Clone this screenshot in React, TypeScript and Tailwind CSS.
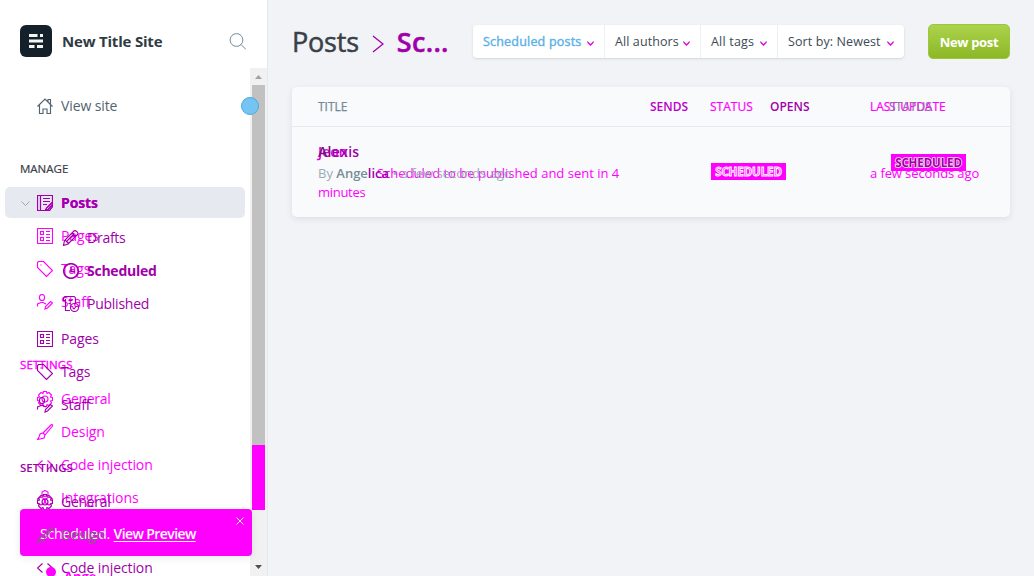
import React from "react";

type IconName = "home" | "posts" | "pages" | "tag" | "staff" | "pen" | "clock" | "published" | "gear" | "brush" | "code" | "box";

const shapes: Record<IconName, React.ReactNode> = {
  home: <path d="M.5 8.5 8 1l7.5 7.5M2.5 7v8.5H6V11h4v4.5h3.5V7M11 3.5v-2h2.5V6" />,
  posts: <path d="M.5.5h15v11l-3 4H.5zM3.5.5v15M6 3.500h7M6 6.500h7M6 9.500h4M15 7.500l-5 5-2 3 3-1 4.500-5" />,
  pages: <path d="M.5.5h15v15H.5zM3.500 3.500h3v3h-3zM3.500 9.500h3v3h-3zM9 3.500h4M9 6.500h4M9 9.500h4M9 12.500h4" />,
  tag: <path d="M.5 1.500v5l9 9 6-6-9-9h-5zM4 3.500v1" />,
  staff: <path d="M5 .5a2.500 2.500 0 0 1 2.500 2.500v1a2.500 2.500 0 0 1-5 0V3A2.500 2.500 0 0 1 5 .5zM.5 12.500V10L4 8.500h2L9 10M8 15l.5-2.500 5-5 2 1.500-5 5z" />,
  pen: <path d="m.5 15.500 1-5L11 1c1.500-1.500 5 2 3.500 3.500L5 14zM9 3l4 4M2 10l4 4M4 11l7-7" />,
  clock: <><circle cx="8" cy="8" r="7.300" strokeWidth="1.600" /><path d="M8 4v4.500h4" strokeWidth="1.600" /></>,
  published: <><path d="M7 14.500H2.500v-10H.5V3C.5 1.500 1 .5 2.500.5h8c1.500 0 2 1 2 2.500v4M2.500 4.500V3M5.500 4.500h4M5.500 7.500h2" /><circle cx="11.500" cy="11.500" r="4" /><path d="m9.500 11.500 1.500 1.500 2.500-3" /></>,
  gear: <><path d="M6.500.5h3l.5 2 2-1 2.500 2.500-1 2 2 .5v3l-2 .5 1 2-2.500 2.500-2-1-.5 2h-3l-.5-2-2 1L1.500 12l1-2-2-.5v-3l2-.5-1-2L4 1.500l2 1z" /><circle cx="8" cy="8" r="3" /></>,
  brush: <path d="M6 9 14 1c1-1 2 0 1.500 1L8 11M6 9l2 2-1 3-6.500 1.500L2 13l1-3z" />,
  code: <path d="M5.500 3.500.5 8l5 4.500M10.500 3.500l5 4.500-5 4.500" />,
  box: <path d="M8 .5 11 2v3L8 6.500 5 5V2zM4 7l3.500 2v4L4 15l-3.500-2V9zM12 7l3.500 2v4L12 15l-3.500-2V9z" />,
};

function Icon({ name }: { name: IconName }) {
  return <svg viewBox="0 0 16 16" className="size-4 shrink-0 fill-none stroke-current stroke-[1.15]">{shapes[name]}</svg>;
}

function Row({ icon, label, className = "", child = false }: { icon: IconName; label: string; className?: string; child?: boolean }) {
  return (
    <div className={`flex h-[33px] shrink-0 items-center gap-2 ${child ? "pl-[63px] tracking-[-0.25px]" : "pl-[37px] tracking-[-0.1px]"} ${className}`}>
      <Icon name={icon} />
      <span className="text-[14px] leading-5 whitespace-nowrap">{label}</span>
    </div>
  );
}

function Filter({ label, className }: { label: string; className: string }) {
  return (
    <div className={`flex items-center justify-between pr-[10px] pl-[10px] ${className}`}>
      <span className="pt-[2px] whitespace-nowrap">{label}</span>
      <svg viewBox="0 0 7 5" className="mt-[3px] h-[5px] w-[7px] fill-none stroke-[1.4]">
        <path d="m.5 1 3 3 3-3" className="stroke-[#e000e0]" />
        <path d="M.5 0v1.500M6.500 0v1.500" className="stroke-[#aab0b4]" />
      </svg>
    </div>
  );
}

function Badge({ className }: { className: string }) {
  return (
    <span className={`grid h-[17px] w-[75px] place-items-center bg-[#ff00ff] text-[11.500px] leading-none font-bold tracking-[-0.1px] ${className}`}>
      <span className="pt-px">SCHEDULED</span>
    </span>
  );
}

export default function App() {
  return (
    <div className="relative flex h-[576px] w-[1034px] overflow-hidden bg-[#f2f3f7] font-['Open_Sans','Noto_Sans',sans-serif] text-[#394047]">
      <aside className="flex w-[268px] shrink-0 flex-col border-r border-[#e5e9ed] bg-white">
        <header className="flex h-[68px] shrink-0 items-center pt-[14px] pr-[21px] pl-5">
          <svg viewBox="0 0 32 32" className="size-8 shrink-0">
            <rect width="32" height="32" rx="6" fill="#15212a" />
            <path d="M9 9h8.500v3H9zM20 9h3v3h-3zM9 14.500h14v3H9zM9 20h5.500v3H9zM17 20h6v3h-6z" fill="#f3f4f4" />
          </svg>
          <span className="ml-[10px] grow text-[15px] font-bold tracking-[-0.2px] whitespace-nowrap text-[#303a43]">New Title Site</span>
          <svg viewBox="0 0 17 17" className="size-[17px] fill-none stroke-[#738a94]"><circle cx="7.500" cy="7" r="6.400" /><path d="m12 11.500 5 5" /></svg>
        </header>
        <div className="flex h-[508px] justify-between">
          <nav className="grid h-full w-[250px] overflow-hidden">
            <div className="flex flex-col [grid-area:1/1]">
              <Row icon="home" label="View site" className="mt-[21px] text-[#526470]" />
              <h2 className="mt-[38px] ml-5 h-[18px] text-[11.500px] leading-[18px] [-webkit-text-stroke:0.2px]">MANAGE</h2>
              <div className="mt-[9px] ml-[5px] h-[31px] w-[240px] shrink-0 rounded-[5px] bg-[#e6eaf0]" />
              <div className="mt-auto ml-[22px] h-2 w-9 rounded-t-full bg-[#e5ecf2]" />
            </div>
            <div className="flex flex-col pt-[118px] text-[#ff00ff] [grid-area:1/1]">
              <Row icon="posts" label="Posts" className="font-bold" />
              <Row icon="pages" label="Pages" />
              <Row icon="tag" label="Tags" />
              <Row icon="staff" label="Staff" />
              <h2 className="mt-[38px] ml-5 h-[18px] shrink-0 text-[11.500px] leading-[18px] tracking-[0.1px] [-webkit-text-stroke:0.35px]">SETTINGS</h2>
              <Row icon="gear" label="General" className="mt-[8px] tracking-[-0.3px]" />
              <Row icon="brush" label="Design" />
              <Row icon="code" label="Code injection" />
              <Row icon="box" label="Integrations" />
            </div>
            <div className="flex flex-col pt-[118px] text-[#a000a9] [grid-area:1/1]">
              <div className="grid">
                <Row icon="posts" label="Posts" className="font-bold [grid-area:1/1]" />
                <svg viewBox="0 0 9 5" className="mt-[15px] ml-[21px] h-[5px] w-[9px] fill-none stroke-[#a4a4aa] [grid-area:1/1]"><path d="m.5.5 4 4 4-4" /></svg>
              </div>
              <Row icon="pen" label="Drafts" child className="mt-[2px]" />
              <Row icon="clock" label="Scheduled" child className="font-bold" />
              <Row icon="published" label="Published" child />
              <Row icon="pages" label="Pages" className="mt-[2px]" />
              <Row icon="tag" label="Tags" />
              <Row icon="staff" label="Staff" />
              <h2 className="mt-[38px] ml-5 h-[18px] shrink-0 text-[11.500px] leading-[18px] font-semibold">SETTINGS</h2>
              <Row icon="gear" label="General" className="mt-[8px] tracking-[-0.3px]" />
              <Row icon="brush" label="Design" />
              <Row icon="code" label="Code injection" />
            </div>
          </nav>
          <div className="flex w-[17px] flex-col items-center bg-[#f1f1f1]">
            <svg viewBox="0 0 17 17" className="size-[17px]"><path d="m5 11 3.500-4 3.500 4z" fill="#a3a3a3" /></svg>
            <div className="h-[360px] w-[13px] bg-[#c1c1c1]" />
            <div className="h-[65px] w-[13px] bg-[#ff00ff]" />
            <svg viewBox="0 0 17 17" className="mt-auto size-[17px]"><path d="m5 6 3.500 4L12 6z" fill="#505050" /></svg>
          </div>
        </div>
      </aside>

      <main className="grow pr-6 pl-6">
        <header className="flex h-[87px] items-start pt-6">
          <h1 className="flex h-[37px] w-[181px] items-center text-[27px] tracking-[-0.2px] [-webkit-text-stroke:0.5px]">
            Posts
            <svg viewBox="0 0 12 18" className="mt-[2px] mr-[13px] ml-[13px] h-[18px] w-3 fill-none stroke-[#a000a9] stroke-[1.3]"><path d="m1 1 10 8-10 8" /></svg>
            <span className="font-semibold tracking-[0.3px] text-[#a000a9]">Sc...</span>
          </h1>
          <div className="mt-px flex h-[33px] w-[431px] rounded bg-white text-[12.500px] text-[#3d4a54] shadow-sm">
            <Filter label="Scheduled posts" className="w-[131px] tracking-[0.2px] text-[#5ab1e8] [-webkit-text-stroke:0.4px]" />
            <Filter label="All authors" className="w-[96px] border-l border-[#edf0f2] tracking-[0.1px]" />
            <Filter label="All tags" className="w-[77px] border-l border-[#edf0f2] tracking-[0.2px]" />
            <Filter label="Sort by: Newest" className="w-[127px] border-l border-[#edf0f2] tracking-[0.1px]" />
          </div>
          <button className="ml-6 h-[35px] w-[82px] rounded-[5px] border border-[#9dc63e] bg-linear-to-b from-[#abd34c] to-[#8db823] pt-[2px] text-[13px] font-bold tracking-[-0.3px] whitespace-nowrap text-white">New post</button>
        </header>
        <section className="h-[130px] w-[718px] rounded-[5px] bg-[#f9fafc] shadow-[0_2px_6px_rgba(30,50,70,0.10)]">
          <div className="grid h-10 grid-cols-[332px_60px_60px_100px_1fr] items-center border-b border-[#e3ebf1] pl-[26px] text-[12px] text-[#738a94]">
            <span className="[-webkit-text-stroke:0.25px]">TITLE</span>
            <span className="font-semibold text-[#b900c9]">SENDS</span>
            <span className="text-[#ff00ff] [-webkit-text-stroke:0.2px]">STATUS</span>
            <span className="font-semibold text-[#a000a9]">OPENS</span>
            <span className="grid">
              <span className="text-[#ff00ff] [grid-area:1/1] [-webkit-text-stroke:0.2px]">LAST UPDATE</span>
              <span className="ml-[19px] text-[#9b6cab] [grid-area:1/1] [-webkit-text-stroke:0.2px]">STATUS</span>
            </span>
          </div>
          <div className="grid h-[90px] grid-cols-[393px_159px_1fr] pl-[26px]">
            <div className="pt-[15px]">
              <div className="grid text-[14px] leading-5">
                <span className="font-semibold text-[#e000e0] [grid-area:1/1]">Jeon</span>
                <span className="font-semibold tracking-[0.3px] text-[#76107e] [grid-area:1/1]">Al<span className="text-[#a000a9]">exis</span></span>
              </div>
              <div className="mt-[2px] grid text-[13px] leading-[19px] whitespace-nowrap">
                <p className="ml-[59px] text-[#ff00ff] [grid-area:1/1]">Scheduled to be published and sent in 4<br /><span className="-ml-[59px] tracking-[-0.3px]">minutes</span></p>
                <p className="text-[#9cabb3] [grid-area:1/1]">By <b className="font-semibold text-[#778d97]">Ange</b><b className="font-semibold text-[#a000a9]">lica</b> • a few seconds ago</p>
              </div>
            </div>
            <Badge className="mt-[36px] text-[#ff30ff] [-webkit-text-stroke:0.9px_#fff]" />
            <div className="pt-[27px]">
              <Badge className="ml-[21px] text-[#a000a0] [-webkit-text-stroke:1.6px_#f3e3f3] [paint-order:stroke]" />
              <span className="-mt-[7px] block text-[13px] leading-[18px] tracking-[-0.1px] whitespace-nowrap text-[#ff00ff]">a few seconds ago</span>
            </div>
          </div>
        </section>
      </main>

      <div className="absolute top-[97px] left-[241px] size-[18px] rounded-full border border-[#48a9dc] bg-[#76c4f3]" />
      <div className="absolute top-[509px] left-5 h-[47px] w-[232px] rounded bg-[#ff00ff] text-white shadow-[0_2px_8px_rgba(0,0,0,0.08)]">
        <div className="grid pt-[9px] text-[14px] leading-5">
          <p className="mt-[6px] ml-5 font-semibold tracking-[-0.6px] whitespace-nowrap [grid-area:1/1]"><span className="font-normal tracking-[-0.15px]">Scheduled. </span><u className="underline-offset-2">View Preview</u></p>
          <div className="-ml-5 text-[#806080] [grid-area:1/1]"><Row icon="brush" label="Design" /></div>
        </div>
        <svg viewBox="0 0 8 8" className="absolute top-[8px] right-[8px] size-2 fill-none stroke-white"><path d="m.5.5 7 7M7.500.5l-7 7" /></svg>
      </div>
      <div className="absolute top-[567px] left-[46px] size-[10px] rounded-full bg-[#ff00ff]" />
      <span className="absolute top-[567px] left-[64px] text-[13px] leading-[18px] font-bold text-[#ff00ff]">Ange</span>
    </div>
  );
}
